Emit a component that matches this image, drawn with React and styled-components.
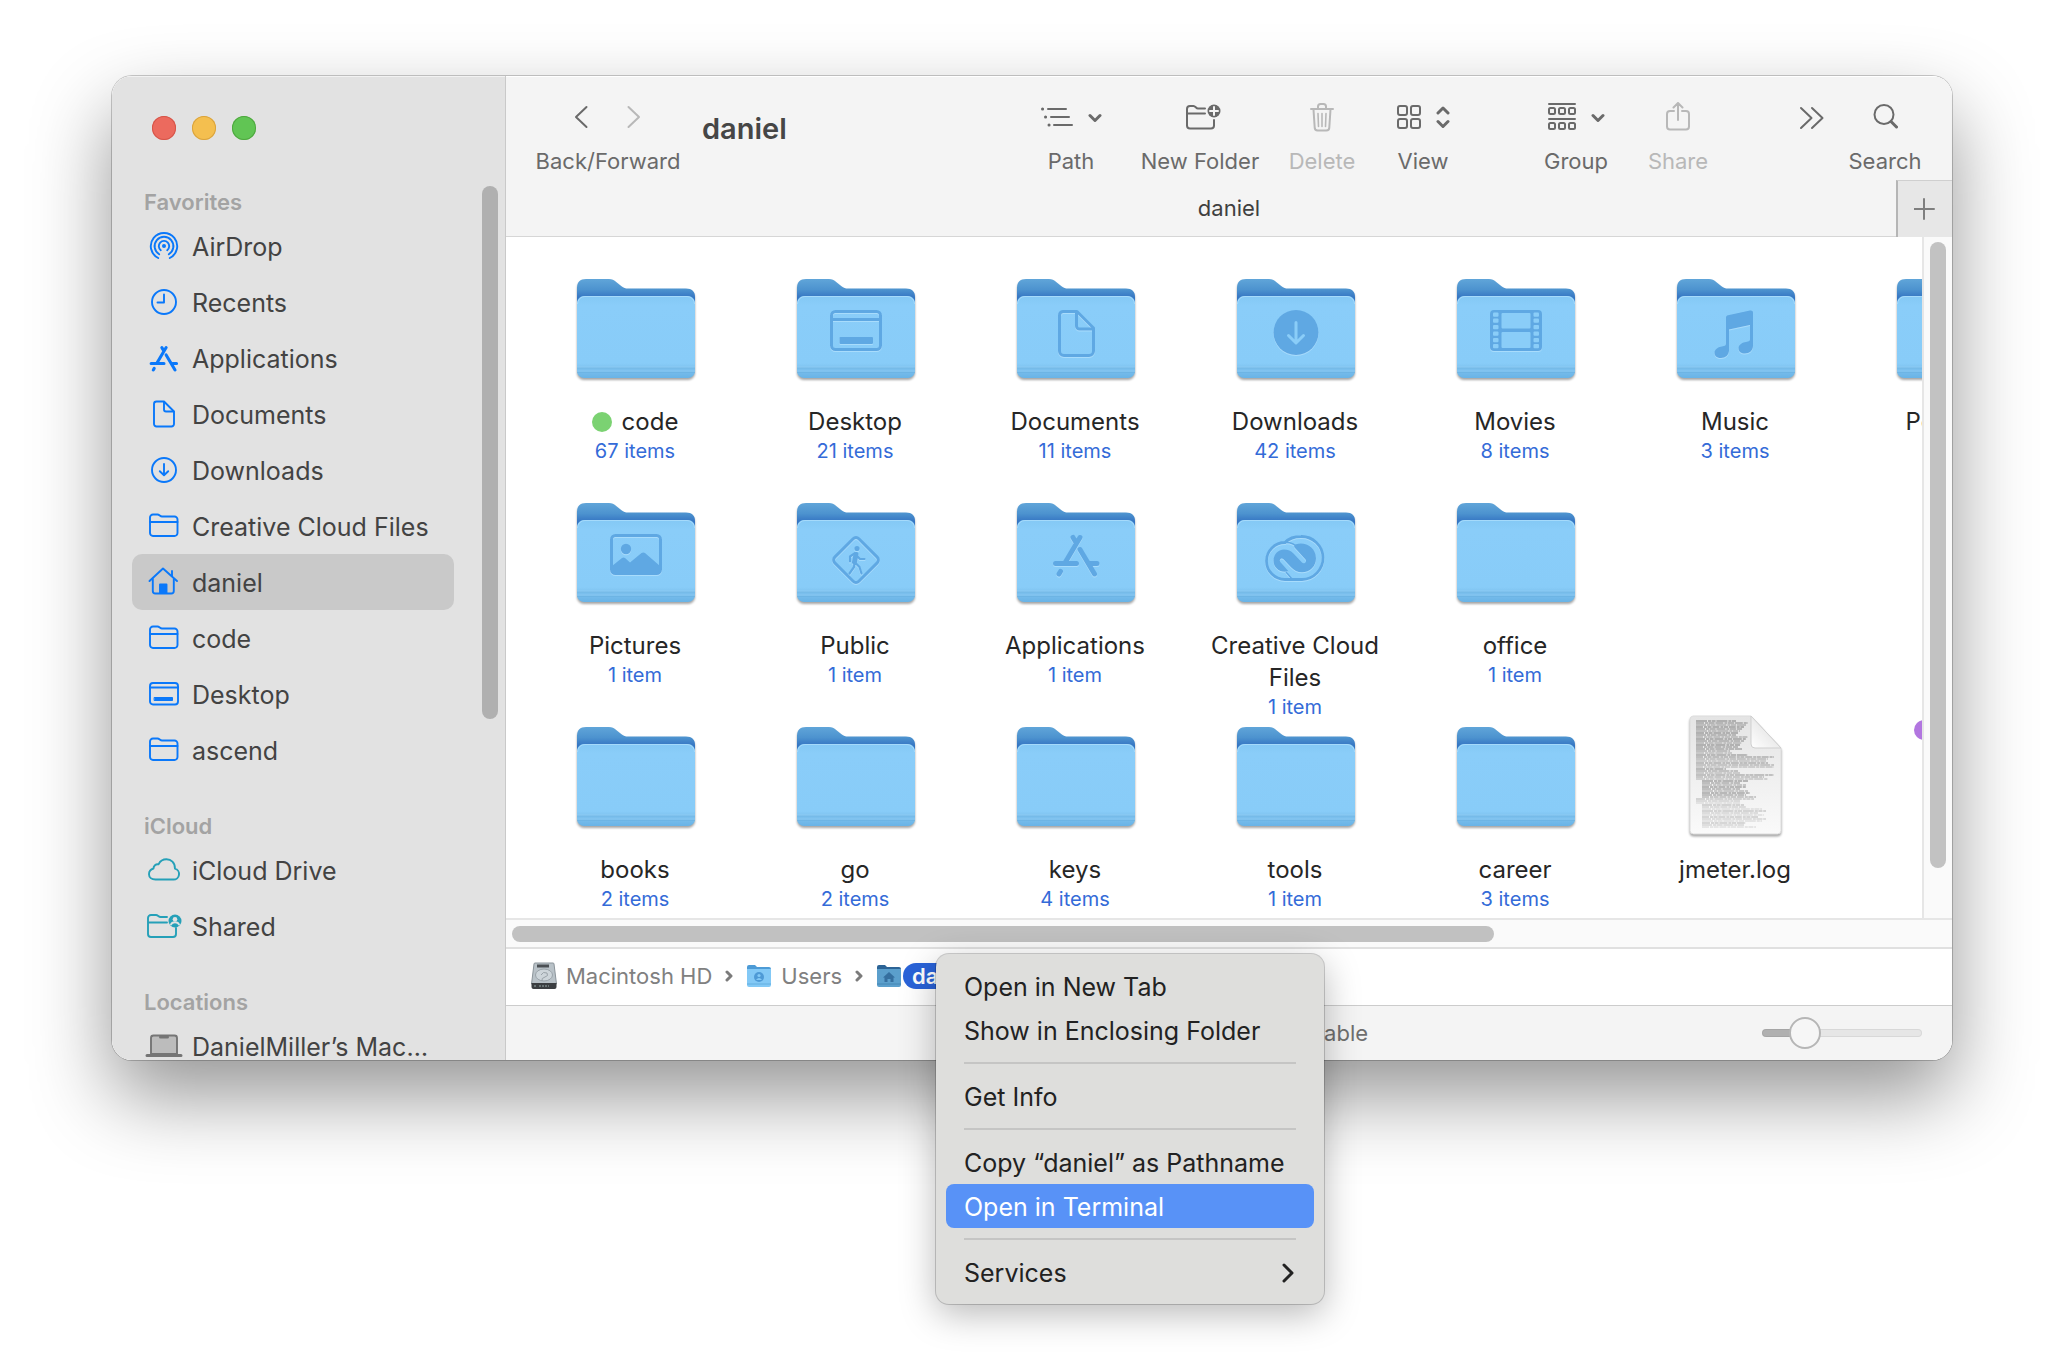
import React, { useState } from "react";
import styled, { createGlobalStyle } from "styled-components";

const blue = "#0a78fa";
const teal = "#25a0b8";
const toolColor = "#6a6a6a";
const disabledColor = "#b8b8b8";
const glyphColor = "#5fa8e3";

const favorites = [
    { name: "AirDrop", icon: "airdrop" },
    { name: "Recents", icon: "clock" },
    { name: "Applications", icon: "apps" },
    { name: "Documents", icon: "document" },
    { name: "Downloads", icon: "download" },
    { name: "Creative Cloud Files", icon: "folder" },
    { name: "daniel", icon: "home" },
    { name: "code", icon: "folder" },
    { name: "Desktop", icon: "desktop" },
    { name: "ascend", icon: "folder" },
];

const icloud = [
    { name: "iCloud Drive", icon: "cloud" },
    { name: "Shared", icon: "shared" },
];

const locations = [{ name: "DanielMiller’s Mac…", icon: "laptop" }];

const files = [
    { name: "code", info: "67 items", tag: "#7bd272" },
    { name: "Desktop", info: "21 items", glyph: "desktop" },
    { name: "Documents", info: "11 items", glyph: "document" },
    { name: "Downloads", info: "42 items", glyph: "download" },
    { name: "Movies", info: "8 items", glyph: "movies" },
    { name: "Music", info: "3 items", glyph: "music" },
    { name: "Postman", info: "" },
    { name: "Pictures", info: "1 item", glyph: "pictures" },
    { name: "Public", info: "1 item", glyph: "public" },
    { name: "Applications", info: "1 item", glyph: "apps" },
    { name: "Creative Cloud Files", info: "1 item", glyph: "creative" },
    { name: "office", info: "1 item" },
    { name: "books", info: "2 items", firstInRow: true },
    { name: "go", info: "2 items" },
    { name: "keys", info: "4 items" },
    { name: "tools", info: "1 item" },
    { name: "career", info: "3 items" },
    { name: "jmeter.log", file: true },
];

const AppsGlyph = () => (
    <g fill="none" stroke="currentColor" strokeWidth="5" strokeLinecap="round">
        <path d="M68 49.500L53.500 74M61 49.500L64 54.500" />
        <path d="M43.500 75.500H64.500M78.500 75.500H85" />
        <path d="M68 61.500L82.500 86" />
        <path d="M48.500 83.500L47 86" />
    </g>
);

const sideIcons = {
    airdrop: (
        <>
            <circle cx="16" cy="16" r="2" fill="currentColor" stroke="none" />
            <path d="M12.800 20.200a5.200 5.200 0 1 1 6.400 0" />
            <path d="M11.200 24.200a9.400 9.400 0 1 1 9.600 0" />
            <path d="M10.200 28a13.200 13.200 0 1 1 11.600 0" />
        </>
    ),
    clock: (
        <>
            <circle cx="16" cy="16" r="12" />
            <path d="M16 8.500V16.500H9.500" />
        </>
    ),
    document: (
        <>
            <path d="M8.500 3.500H16L26 13.500V26a2.500 2.500 0 0 1-2.500 2.500h-15A2.500 2.500 0 0 1 6 26V6a2.500 2.500 0 0 1 2.500-2.500z" />
            <path d="M16 4v7.500a2 2 0 0 0 2 2h7.500" />
        </>
    ),
    download: (
        <>
            <circle cx="16" cy="16" r="12" />
            <path d="M16 10v11M11.800 17.200L16 21.200l4.200-4" />
        </>
    ),
    folder: (
        <>
            <path d="M2 7.500a3 3 0 0 1 3-3h4.500c2 0 2.500 2 4.500 2h12.500a3 3 0 0 1 3 3V23a3 3 0 0 1-3 3H5a3 3 0 0 1-3-3z" />
            <path d="M2 12h27.500" />
        </>
    ),
    home: (
        <>
            <path d="M1.500 15L15 2.500 29 15" />
            <path d="M4.800 13v12a2.500 2.500 0 0 0 2.500 2.500h16a2.500 2.500 0 0 0 2.500-2.500V13M24 10V5" />
            <path d="M12 27v-8.500h6.500V27z" fill="currentColor" />
        </>
    ),
    desktop: (
        <>
            <rect x="2" y="5" width="28" height="21.500" rx="3" />
            <path d="M2 9.500h28" />
            <rect x="6.500" y="19.500" width="18" height="3" fill="currentColor" strokeWidth="1" />
        </>
    ),
    cloud: (
        <path d="M7.500 25.500h18a5.500 5.500 0 0 0 1.500-10.800C27 8.500 23 5.300 18.500 5.300c-3.800 0-6.500 2-8 5-2.800-.5-5 1.500-5 4.200C3 15.200 1 17.500 1 20.200c0 3 2.500 5.300 6.500 5.300z" />
    ),
    shared: (
        <>
            <path d="M19 7H12.500c-2 0-2.500-2-4.500-2H3a3 3 0 0 0-3 3v16a3 3 0 0 0 3 3h22a3 3 0 0 0 3-3v-6M0 12.500h19" />
            <circle cx="27" cy="11" r="6.500" fill="currentColor" stroke="none" />
            <circle cx="27" cy="9.300" r="2.300" fill="#e2e2e2" stroke="none" />
            <path d="M23 14.500c1-3 7-3 8 0" stroke="#e2e2e2" />
        </>
    ),
    laptop: (
        <>
            <path d="M3 24V8a2.500 2.500 0 0 1 2.500-2.500h21A2.500 2.500 0 0 1 29 8v16z" fill="#bcbcbc" />
            <path d="M-1 25.500H33M12.500 7h7" strokeWidth="3" />
        </>
    ),
};

const SideIcon = ({ name }) => (
    <IconBox $name={name}>
        {name === "apps" ? (
            <svg width="30" height="30" viewBox="40 42 49 49">
                <AppsGlyph />
            </svg>
        ) : (
            <svg
                width="32"
                height="32"
                viewBox="0 0 32 32"
                fill="none"
                stroke="currentColor"
                strokeWidth="1.900"
                strokeLinecap="round"
                strokeLinejoin="round"
                overflow="visible"
            >
                {sideIcons[name]}
            </svg>
        )}
    </IconBox>
);

const sprockets = [50, 56, 62.500, 69, 75.500, 81.500];

const glyphs = {
    desktop: (
        <g fill="none" stroke={glyphColor} strokeWidth="3">
            <rect x="39.500" y="47.500" width="49" height="38" rx="4" />
            <path d="M39.500 55.500h49" />
            <rect x="47.500" y="73" width="33.500" height="7" rx="1" fill={glyphColor} stroke="none" />
        </g>
    ),
    document: (
        <g fill="none" stroke={glyphColor} strokeWidth="3" strokeLinejoin="round">
            <path d="M51 47.500H65L81.500 64V87a4.500 4.500 0 0 1-4.500 4.500H52a4.500 4.500 0 0 1-4.500-4.500V51.500a4 4 0 0 1 3.500-4z" />
            <path d="M64.500 48v14a3 3 0 0 0 3 3H81" />
        </g>
    ),
    download: (
        <>
            <circle cx="64" cy="68.500" r="22.500" fill={glyphColor} />
            <path
                d="M64 58.500v20M56.500 71.500L64 79l7.500-7.500"
                fill="none"
                stroke="#8acdf8"
                strokeWidth="3"
                strokeLinecap="round"
                strokeLinejoin="round"
            />
        </>
    ),
    movies: (
        <>
            <rect x="38" y="46" width="52" height="41" rx="4" fill={glyphColor} />
            <rect x="49.500" y="49" width="29" height="15.500" rx="1" fill="#8acdf8" />
            <rect x="49.500" y="68" width="29" height="16" rx="1" fill="#8acdf8" />
            {sprockets.map((y) => (
                <g key={y} fill="#8acdf8">
                    <rect x="41" y={y - 1.500} width="5.500" height="4.200" rx="1" />
                    <rect x="81.500" y={y - 1.500} width="5.500" height="4.200" rx="1" />
                </g>
            ))}
        </>
    ),
    music: (
        <g fill={glyphColor}>
            <path d="M54 53.500c0-1.200.8-2 2-2.300l22-4.600c1.700-.4 3 .4 3 2V82c0 4.500-3.500 7.500-8 7.500-3.800 0-6.500-2-6.500-5 0-3.500 2.800-5.500 6.300-6.300l3.200-.8c1.300-.3 2-1 2-2.200V61L57 65.500V86.500c0 4.500-3.500 7.500-8 7.500-3.800 0-6.500-2-6.500-5 0-3.500 2.800-5.500 6.300-6.300l3.200-.8c1.300-.3 2-1 2-2.200z" />
        </g>
    ),
    pictures: (
        <>
            <rect x="39.500" y="47.500" width="49" height="38" rx="4" fill="none" stroke={glyphColor} strokeWidth="3" />
            <circle cx="54" cy="61" r="5.200" fill={glyphColor} />
            <path d="M40 78l10-8c1-.7 2-.7 3 0l5 4.500 11.500-9.500c1-.8 2.500-.8 3.500 0L88 78v5c0 2-1 3-3 3H43c-2 0-3-1-3-3z" fill={glyphColor} />
        </>
    ),
    public: (
        <g fill="none" stroke={glyphColor} strokeLinecap="round" strokeLinejoin="round">
            <rect x="47" y="55" width="34" height="34" rx="4" strokeWidth="3" transform="rotate(45 64 72)" />
            <circle cx="65" cy="60.500" r="2.600" fill={glyphColor} stroke="none" />
            <path d="M64 66.500L62.500 74" strokeWidth="5" />
            <path d="M62.500 65.500l-4.500 3v5M65.500 68.500l2.500 2.500h4.500M62.500 75l-.5 4-4.500 6.500M63.500 75l4 4 2 6.500" strokeWidth="2.200" />
        </g>
    ),
    apps: (
        <g color={glyphColor}>
            <AppsGlyph />
        </g>
    ),
    creative: (
        <>
            <path
                d="M53 54.500c4-4.200 9.500-6 16-6a21.500 21.500 0 0 1 1 43H53a18.500 18.500 0 0 1 0-37z"
                fill="none"
                stroke={glyphColor}
                strokeWidth="2.800"
            />
            <path
                d="M52 61.500c4 0 7 1.500 9.500 4L70 74.500c2 2 5.500-.5 3.500-3L63 60c-1.500-1.500-1-3 1-3.800 9-3 20 3 20 14 0 8-6 14-14 14-4.500 0-8-2-11-5l-7.500-8c-2-2-5 .5-3 3l8 9c-8 2-15-3-15-10.500 0-6 4.500-11.200 10.500-11.200z"
                fill={glyphColor}
            />
            <path d="M53 54.500c6-.5 9.500 1.500 13 5M54 84l6 7" fill="none" stroke={glyphColor} strokeWidth="1.500" />
        </>
    ),
};

const FolderArt = ({ glyph }) => (
    <FolderSvg viewBox="0 0 128 128">
        <path d="M5 24c0-6 3-9 9-9h23c3 0 5 1 7.500 3.200l5 4c2 1.700 4 2.300 6.500 2.300h58c6 0 9 3 9 8.500V90H5z" fill="url(#folderBack)" />
        <rect x="5" y="32" width="118" height="82" rx="7" fill="url(#folderFront)" />
        <path d="M5.500 40a7.500 7.500 0 0 1 7.500-7.500h102a7.500 7.500 0 0 1 7.500 7.500" fill="none" stroke="#a5dafb" />
        <path d="M5 104h118M5 108.500h118" stroke="#66aede" strokeOpacity=".5" />
        <path d="M5 103h118M5 107h118" stroke="#9bd5fa" strokeOpacity=".5" />
        {glyph ? <g filter="url(#emboss)">{glyphs[glyph]}</g> : null}
    </FolderSvg>
);

// blocks of log text: [lines, indent, shortest, longest, opacity]
const logBlocks = [
    [14, 0, 40, 54, 0.6],
    [4, 0, 34, 56, 0.55],
    [6, 0, 70, 80, 0.5],
    [3, 0, 30, 54, 0.55],
    [3, 0, 60, 80, 0.5],
    [9, 6, 42, 62, 0.6],
    [3, 0, 40, 62, 0.35],
    [12, 6, 48, 74, 0.35],
];

const logLines = logBlocks
    .flatMap(([count, indent, min, max, shade]) =>
        Array.from({ length: count }, (_, i) => ({ indent, min, max, shade, i }))
    )
    .map((l, n) => ({
        y: 9 + n * 2,
        x: 24 + l.indent,
        w: l.min - l.indent + ((n * n * 7 + n * 5) % (l.max - l.min)),
        shade: l.shade - (l.i % 3) * 0.08,
    }));

const LogArt = () => (
    <FolderSvg viewBox="0 0 128 128">
        <path d="M21 4H79L109 36V118.500a3.500 3.500 0 0 1-3.500 3.500h-84A3.500 3.500 0 0 1 18 118.500V7.500A3.500 3.500 0 0 1 21 4z" fill="url(#paper)" stroke="#dcdcdc" />
        {logLines.map((l) => (
            <path
                key={l.y}
                d={`M${l.x} ${l.y}h${l.w}`}
                stroke="#333"
                strokeWidth="1.200"
                strokeOpacity={l.shade}
                strokeDasharray={`${7 + (l.y % 5)} 1 3 .6 ${4 + (l.y % 3)} .8`}
            />
        ))}
        <path d="M79 4v28a4 4 0 0 0 4 4h26z" fill="url(#fold)" stroke="#cfcfcf" />
    </FolderSvg>
);

// gradients shared by every folder and file icon
const Defs = () => (
    <DefsSvg width="0" height="0">
        <defs>
            <linearGradient id="folderBack" gradientUnits="userSpaceOnUse" x1="0" y1="15" x2="0" y2="34">
                <stop offset="0" stopColor="#60a5d9" />
                <stop offset=".55" stopColor="#4d93cf" />
                <stop offset="1" stopColor="#3474c2" />
            </linearGradient>
            <linearGradient id="folderFront" x1="0" y1="0" x2="0" y2="1">
                <stop offset="0" stopColor="#84c8f5" />
                <stop offset=".12" stopColor="#8acdf9" />
                <stop offset=".82" stopColor="#88ccf8" />
                <stop offset=".88" stopColor="#7dc1ee" />
                <stop offset="1" stopColor="#69b3e6" />
            </linearGradient>
            <linearGradient id="paper" x1="0" y1="0" x2="0" y2="1">
                <stop offset="0" stopColor="#e4e4e4" />
                <stop offset="1" stopColor="#fafafa" />
            </linearGradient>
            <linearGradient id="fold" x1="0" y1="1" x2="1" y2="0">
                <stop offset="0" stopColor="#fff" />
                <stop offset="1" stopColor="#d8d8d8" />
            </linearGradient>
            <filter id="emboss">
                <feDropShadow dx="0" dy="1" stdDeviation=".5" floodColor="#a8dcfc" />
            </filter>
        </defs>
    </DefsSvg>
);

const ToolSvg = ({ w, h, children, stroke = 2 }) => (
    <svg
        width={w}
        height={h}
        viewBox={`0 0 ${w} ${h}`}
        fill="none"
        stroke="currentColor"
        strokeWidth={stroke}
        strokeLinecap="round"
        strokeLinejoin="round"
    >
        {children}
    </svg>
);

const ChevronDown = () => (
    <ToolSvg w={14} h={10} stroke={3}>
        <path d="M2 3.500l5 5 5-5" />
    </ToolSvg>
);

const Cells = ({ y }) => (
    <>
        <rect x="1" y={y} width="6" height="6" rx="1.500" />
        <rect x="11" y={y} width="6" height="6" rx="1.500" />
        <rect x="21" y={y} width="6" height="6" rx="1.500" />
    </>
);

const SidebarSection = ({ title, items, selected, onSelect }) => (
    <Section>
        <SectionTitle>{title}</SectionTitle>
        {items.map((item) => (
            <SideRow
                key={item.name}
                $active={item.name === selected}
                onClick={() => onSelect(item.name)}
            >
                <SideIcon name={item.icon} />
                <SideName>{item.name}</SideName>
            </SideRow>
        ))}
    </Section>
);

const MiniFolder = ({ dark, children }) => (
    <svg width="26" height="26" viewBox="0 0 26 26">
        <path d="M1 4q0-2 2-2h6l2 2h12q2 0 2 2v8H1z" fill={dark ? "#2c6496" : "#4d9bd6"} />
        <path d="M1 6h24v16q0 2-2 2H3q-2 0-2-2z" fill={dark ? "#5b9fcc" : "#83c9f6"} />
        <path d="M1 21h24" stroke={dark ? "#4486b4" : "#63afe0"} />
        <g fill={dark ? "#356f9f" : "#4e9ad6"}>{children}</g>
    </svg>
);

export default function App() {
    const [selected, setSelected] = useState("daniel");
    const [zoom, setZoom] = useState(21);

    return (
        <Page>
            <GlobalStyle />
            <Defs />
            <Frame>
                <Shell>
                    <Sidebar>
                        <Lights>
                            <Light $color="#ec6a5e" $edge="#d55549" aria-label="Close" />
                            <Light $color="#f4bf4f" $edge="#d9a33e" aria-label="Minimize" />
                            <Light $color="#61c554" $edge="#4fa73f" aria-label="Zoom" />
                        </Lights>
                        <SideScroll>
                            <SideList>
                                <SidebarSection title="Favorites" items={favorites} selected={selected} onSelect={setSelected} />
                                <SidebarSection title="iCloud" items={icloud} selected={selected} onSelect={setSelected} />
                                <SidebarSection title="Locations" items={locations} selected={selected} onSelect={setSelected} />
                            </SideList>
                            <SideThumb />
                        </SideScroll>
                    </Sidebar>

                    <Main>
                        <Toolbar>
                            <History>
                                <HistoryButtons>
                                    <NavButton aria-label="Back">
                                        <ToolSvg w={24} h={24}>
                                            <path d="M16.500 2L6 12 16.500 22" />
                                        </ToolSvg>
                                    </NavButton>
                                    <NavButton aria-label="Forward" disabled>
                                        <ToolSvg w={24} h={24}>
                                            <path d="M6.500 2L17 12 6.500 22" />
                                        </ToolSvg>
                                    </NavButton>
                                </HistoryButtons>
                                <ToolLabel>Back/Forward</ToolLabel>
                            </History>
                            <Title>daniel</Title>
                            <ToolGroup>
                                <Tool $width={126}>
                                    <ToolIcons>
                                        <ToolSvg w={32} h={20}>
                                            <path d="M7 2h18M10 10h18M13 18h18" />
                                            <path d="M1.500 2h.1M4.500 10h.1M8 18h.1" strokeWidth="3" />
                                        </ToolSvg>
                                        <ChevronDown />
                                    </ToolIcons>
                                    <ToolLabel>Path</ToolLabel>
                                </Tool>
                                <Tool $width={132}>
                                    <ToolIcons>
                                        <ToolSvg w={42} h={26}>
                                            <path d="M26 4.500h-7c-2 0-2.500-2.500-4.500-2.500H11a3 3 0 0 0-3 3v16.500a3 3 0 0 0 3 3h21a3 3 0 0 0 3-3V16M8 9.500h18" />
                                            <circle cx="35" cy="7" r="6.500" fill="currentColor" stroke="none" />
                                            <path d="M35 3v8M31 7h8" stroke="#f4f4f4" />
                                        </ToolSvg>
                                    </ToolIcons>
                                    <ToolLabel>New Folder</ToolLabel>
                                </Tool>
                                <Tool $width={112} disabled>
                                    <ToolIcons>
                                        <ToolSvg w={24} h={30}>
                                            <path d="M1 7h22M3.500 7.500l1.200 18a3 3 0 0 0 3 3h8.600a3 3 0 0 0 3-3l1.200-18M8 6.500V4.500a2.500 2.500 0 0 1 2.500-2.500h3A2.500 2.500 0 0 1 16 4.500v2" />
                                            <path d="M8 11.500l.5 13M12 11.500v13M16 11.500l-.5 13" strokeWidth="1.600" />
                                        </ToolSvg>
                                    </ToolIcons>
                                    <ToolLabel>Delete</ToolLabel>
                                </Tool>
                                <Tool $width={90}>
                                    <ToolIcons>
                                        <ToolSvg w={24} h={24}>
                                            <rect x="1" y="1" width="9" height="9" rx="2" />
                                            <rect x="14" y="1" width="9" height="9" rx="2" />
                                            <rect x="1" y="14" width="9" height="9" rx="2" />
                                            <rect x="14" y="14" width="9" height="9" rx="2" />
                                        </ToolSvg>
                                        <ToolSvg w={14} h={24} stroke={3}>
                                            <path d="M2 8l5-5 5 5M2 16.500l5 5 5-5" />
                                        </ToolSvg>
                                    </ToolIcons>
                                    <ToolLabel>View</ToolLabel>
                                </Tool>
                            </ToolGroup>
                            <ToolGroup>
                                <Tool $width={104}>
                                    <ToolIcons>
                                        <ToolSvg w={28} h={28}>
                                            <path d="M1 1h26M1 16h26" />
                                            <Cells y={5} />
                                            <Cells y={20} />
                                        </ToolSvg>
                                        <ChevronDown />
                                    </ToolIcons>
                                    <ToolLabel>Group</ToolLabel>
                                </Tool>
                                <Tool $width={100} disabled>
                                    <ToolIcons>
                                        <ToolSvg w={24} h={30}>
                                            <path d="M8 9H4a3 3 0 0 0-3 3v12.500a3 3 0 0 0 3 3h16a3 3 0 0 0 3-3V12a3 3 0 0 0-3-3h-4M12 18V1.500M7.500 5.500L12 1l4.500 4.500" />
                                        </ToolSvg>
                                    </ToolIcons>
                                    <ToolLabel>Share</ToolLabel>
                                </Tool>
                            </ToolGroup>
                            <ToolGroup>
                                <Tool $width={56} aria-label="More">
                                    <ToolIcons>
                                        <ToolSvg w={26} h={26}>
                                            <path d="M2 4l10.500 10L2 24M13 4l10.500 10L13 24" />
                                        </ToolSvg>
                                    </ToolIcons>
                                </Tool>
                                <Tool $width={90}>
                                    <ToolIcons>
                                        <ToolSvg w={26} h={26}>
                                            <circle cx="12" cy="10.500" r="9.500" />
                                            <path d="M19 17.500l5.500 5.500" strokeWidth="3" />
                                        </ToolSvg>
                                    </ToolIcons>
                                    <ToolLabel>Search</ToolLabel>
                                </Tool>
                            </ToolGroup>
                        </Toolbar>

                        <TabBar>
                            <Tab>daniel</Tab>
                            <NewTab aria-label="New tab">
                                <ToolSvg w={22} h={22}>
                                    <path d="M10 1v20M0 11h20" />
                                </ToolSvg>
                            </NewTab>
                        </TabBar>

                        <Content>
                            <IconView>
                                {files.map((f, i) => (
                                    <FileItem key={f.name + i} $newRow={f.firstInRow}>
                                        {f.file ? <LogArt /> : <FolderArt glyph={f.glyph} />}
                                        <FileName>
                                            {f.tag ? <Tag $color={f.tag} /> : null}
                                            {f.name}
                                        </FileName>
                                        {f.info ? <FileInfo>{f.info}</FileInfo> : null}
                                    </FileItem>
                                ))}
                                <TagOnly>
                                    <Tag $color="#b276e0" />
                                </TagOnly>
                            </IconView>
                            <VerticalBar>
                                <VerticalThumb />
                            </VerticalBar>
                        </Content>
                        <HorizontalBar>
                            <HorizontalThumb />
                        </HorizontalBar>

                        <PathBar>
                            <Crumb href="#hd">
                                <svg width="26" height="28" viewBox="0 0 26 28">
                                    <path d="M3 2q0-1 1-1h18q1 0 1 1l2.500 20H.5z" fill="#b9c2c8" stroke="#8b949a" />
                                    <path d="M.5 21h25v4q0 2-2 2h-21q-2 0-2-2z" fill="#3b3e41" />
                                    <path d="M6 2.500h12v3H6z" fill="#4b5054" />
                                    <ellipse cx="13" cy="13" rx="8.500" ry="6" fill="#cdd5da" stroke="#9aa3a9" />
                                    <path d="M10 13q2-4 6-2 2 3-2 4-4 1-3 4" fill="none" stroke="#9aa3a9" />
                                    <path d="M3 24h2M8 24h10" stroke="#9aa" strokeDasharray="2 1" />
                                </svg>
                                Macintosh HD
                            </Crumb>
                            <ToolSvg w={8} h={12} stroke={3}>
                                <path d="M2 2l4 4-4 4" />
                            </ToolSvg>
                            <Crumb href="#users">
                                <MiniFolder>
                                    <circle cx="13" cy="14" r="5" />
                                    <circle cx="13" cy="12.500" r="1.600" fill="#83c9f6" />
                                    <path d="M10 17q3-4 6 0z" fill="#83c9f6" />
                                </MiniFolder>
                                Users
                            </Crumb>
                            <ToolSvg w={8} h={12} stroke={3}>
                                <path d="M2 2l4 4-4 4" />
                            </ToolSvg>
                            <ActiveCrumb href="#daniel">
                                <MiniFolder dark>
                                    <path d="M13 9l6 5.500h-1.500V19h-3v-3h-3v3h-3v-4.500H7z" />
                                </MiniFolder>
                                <Pill>daniel</Pill>
                            </ActiveCrumb>
                        </PathBar>

                        <StatusBar>
                            <Status>18 items, 4.36 GB available</Status>
                            <ZoomSlider
                                type="range"
                                aria-label="Icon size"
                                min="0"
                                max="100"
                                value={zoom}
                                onChange={(e) => setZoom(e.target.value)}
                            />
                        </StatusBar>
                    </Main>
                </Shell>

                <Menu>
                    <MenuItem>Open in New Tab</MenuItem>
                    <MenuItem>Show in Enclosing Folder</MenuItem>
                    <Divider />
                    <MenuItem>Get Info</MenuItem>
                    <Divider />
                    <MenuItem>Copy “daniel” as Pathname</MenuItem>
                    <MenuItem $active>Open in Terminal</MenuItem>
                    <Divider />
                    <MenuItem>
                        Services
                        <ToolSvg w={14} h={20} stroke={3}>
                            <path d="M2 2l8 8-8 8" />
                        </ToolSvg>
                    </MenuItem>
                </Menu>
            </Frame>
        </Page>
    );
}

const GlobalStyle = createGlobalStyle`
    * {
        box-sizing: border-box;
    }
    body {
        margin: 0;
        background-color: #fff;
        font-family: Inter, "Liberation Sans", sans-serif;
    }
    button {
        font-family: inherit;
        border: none;
        padding: 0;
        background: none;
    }
    svg {
        flex: none;
    }
`;

const Page = styled.div`
    min-height: 100vh;
    padding: 76px 112px;
    overflow: hidden;
`;

const DefsSvg = styled.svg`
    position: absolute;
`;

const Frame = styled.div`
    position: relative;
    border-radius: 20px;
    box-shadow: 0 0 0 1px rgba(0, 0, 0, 0.2), 0 36px 80px rgba(0, 0, 0, 0.42);
`;

const Shell = styled.div`
    display: flex;
    height: calc(100vh - 374px);
    min-height: 600px;
    border-radius: 20px;
    overflow: hidden;
    background-color: #fff;
`;

const Sidebar = styled.aside`
    display: flex;
    flex-direction: column;
    flex: none;
    width: 394px;
    background-color: #e2e2e2;
    border-right: 1px solid #c9c9c9;
    box-shadow: inset 0 1px 0 #f2f2f2;
`;

const Lights = styled.div`
    display: flex;
    flex: none;
    gap: 16px;
    height: 110px;
    padding: 40px 40px 0;
`;

const Light = styled.button`
    width: 24px;
    height: 24px;
    border-radius: 50%;
    background-color: ${(props) => props.$color};
    box-shadow: inset 0 0 0 1px ${(props) => props.$edge};
`;

const SideScroll = styled.div`
    display: flex;
    flex: 1;
    min-height: 0;
    padding: 0 7px 0 20px;
`;

const SideList = styled.nav`
    flex: 1;
    margin-right: 28px;
    overflow: hidden;
`;

const SideThumb = styled.div`
    flex: none;
    width: 16px;
    height: 61%;
    border-radius: 8px;
    background-color: #b0b0b0;
`;

const Section = styled.section`
    margin-bottom: 32px;
`;

const SectionTitle = styled.h2`
    margin: 0;
    padding-left: 12px;
    font-size: 22px;
    line-height: 32px;
    font-weight: 600;
    color: #a3a3a3;
`;

const SideRow = styled.button`
    display: flex;
    align-items: center;
    gap: 12px;
    width: 100%;
    height: 56px;
    padding-left: 16px;
    border-radius: 10px;
    font-size: 25px;
    color: #434343;
    white-space: nowrap;
    background-color: ${(props) => (props.$active ? "#c9c9c9" : "transparent")};
`;

const SideName = styled.span`
    padding-top: 2px;
`;

const IconBox = styled.span`
    display: flex;
    align-items: center;
    justify-content: center;
    width: 32px;
    height: 32px;
    color: ${({ $name }) => {
        if ($name === "laptop") return "#757575";
        return $name === "cloud" || $name === "shared" ? teal : blue;
    }};
`;

const Main = styled.main`
    display: flex;
    flex-direction: column;
    flex: 1;
    min-width: 0;
`;

const Toolbar = styled.header`
    display: flex;
    gap: 56px;
    flex: none;
    height: 104px;
    padding: 21px 22px 0 24px;
    background-color: #f4f4f4;
    box-shadow: inset 0 1px 0 #fff;
`;

const History = styled.div`
    display: flex;
    flex-direction: column;
    align-items: center;
    gap: 11px;
    width: 156px;
    margin-right: -40px;
`;

const HistoryButtons = styled.div`
    display: flex;
    gap: 28px;
    height: 40px;
`;

const NavButton = styled.button`
    display: flex;
    align-items: center;
    color: ${toolColor};
    &:disabled {
        color: ${disabledColor};
    }
`;

const Title = styled.h1`
    flex: 1;
    margin: 0;
    font-size: 29px;
    line-height: 63px;
    font-weight: 600;
    color: #464646;
`;

const ToolGroup = styled.div`
    display: flex;
    align-items: flex-start;
`;

const Tool = styled.button`
    display: flex;
    flex-direction: column;
    align-items: center;
    gap: 11px;
    width: ${(props) => props.$width}px;
    color: ${toolColor};
    &:disabled {
        color: ${disabledColor};
    }
`;

const ToolIcons = styled.span`
    display: flex;
    align-items: center;
    gap: 15px;
    height: 40px;
`;

const ToolLabel = styled.span`
    font-size: 22px;
    line-height: 26px;
    color: inherit;
    white-space: nowrap;
    ${History} & {
        color: ${toolColor};
    }
`;

const TabBar = styled.div`
    display: grid;
    grid-template-columns: 56px 1fr 56px;
    flex: none;
    height: 57px;
    background-color: #f4f4f4;
    border-bottom: 1px solid #d6d6d6;
`;

const Tab = styled.div`
    grid-column: 2;
    font-size: 22px;
    line-height: 57px;
    text-align: center;
    color: #3f3f3f;
`;

const NewTab = styled.button`
    display: flex;
    align-items: center;
    justify-content: center;
    color: #7f7f7f;
    background-color: #e7e7e7;
    border-top: 1px solid #cfcfcf;
    border-left: 2px solid #b5b5b5;
`;

const Content = styled.div`
    display: flex;
    flex: 1;
    min-height: 0;
`;

const IconView = styled.div`
    display: grid;
    grid-template-columns: repeat(7, 220px);
    grid-auto-rows: 224px;
    flex: 1;
    min-width: 0;
    padding: 27px 0 0 20px;
    overflow: hidden;
`;

const FileItem = styled.div`
    display: flex;
    flex-direction: column;
    align-items: center;
    ${(props) => (props.$newRow ? "grid-column-start: 1;" : "")}
`;

const FolderSvg = styled.svg`
    width: 128px;
    height: 128px;
    margin-bottom: 14px;
    filter: drop-shadow(0 2px 1px rgba(0, 0, 0, 0.35));
`;

const FileName = styled.span`
    display: flex;
    align-items: center;
    gap: 10px;
    max-width: 180px;
    padding-right: 2px;
    font-size: 24px;
    line-height: 32px;
    text-align: center;
    color: #262626;
`;

const FileInfo = styled.span`
    padding-right: 2px;
    font-size: 20px;
    line-height: 27px;
    color: #346bd8;
`;

const Tag = styled.span`
    width: 20px;
    height: 20px;
    border-radius: 50%;
    background-color: ${(props) => props.$color};
`;

const TagOnly = styled.div`
    display: flex;
    padding: 8px 0 0 68px;
    grid-column: 7;
    grid-row: 3;
`;

const VerticalBar = styled.div`
    flex: none;
    width: 30px;
    padding: 5px 5px 50px 6px;
    background-color: #fafafa;
    border-left: 2px solid #e6e6e6;
`;

const VerticalThumb = styled.div`
    width: 16px;
    height: 100%;
    border-radius: 8px;
    background-color: #c2c2c2;
`;

const HorizontalBar = styled.div`
    flex: none;
    height: 31px;
    padding: 6px;
    background-color: #fafafa;
    border-top: 2px solid #e6e6e6;
    border-bottom: 2px solid #e0e0e0;
`;

const HorizontalThumb = styled.div`
    width: 68.5%;
    height: 16px;
    border-radius: 8px;
    background-color: #c1c1c1;
`;

const PathBar = styled.nav`
    display: flex;
    align-items: center;
    gap: 13px;
    flex: none;
    height: 57px;
    padding: 0 0 2px 25px;
    color: #7b7b7b;
    background-color: #fff;
    border-bottom: 1px solid #cccccc;
`;

const Crumb = styled.a`
    display: flex;
    align-items: center;
    gap: 9px;
    font-size: 22px;
    color: #808080;
    text-decoration: none;
`;

const ActiveCrumb = styled(Crumb)`
    gap: 1px;
`;

const Pill = styled.span`
    padding: 0 9px;
    border-radius: 13px;
    font-weight: 600;
    line-height: 26px;
    color: #fff;
    background-color: #2a63d8;
`;

const StatusBar = styled.footer`
    display: grid;
    grid-template-columns: 190px 1fr 190px;
    align-items: center;
    flex: none;
    height: 54px;
    padding-bottom: 1px;
    background-color: #f4f4f4;
`;

const Status = styled.span`
    grid-column: 2;
    font-size: 22px;
    text-align: center;
    color: #6f6f6f;
`;

const ZoomSlider = styled.input`
    appearance: none;
    width: 160px;
    height: 32px;
    margin: 0;
    background: transparent;
    &::-webkit-slider-runnable-track {
        height: 8px;
        border-radius: 4px;
        background: linear-gradient(
            to right,
            #b0b0b0 ${(props) => props.value}%,
            #e6e6e6 ${(props) => props.value}%
        );
        box-shadow: inset 0 0 0 1px rgba(0, 0, 0, 0.06);
    }
    &::-webkit-slider-thumb {
        appearance: none;
        width: 32px;
        height: 32px;
        margin-top: -12px;
        border: 2px solid #b6b6b6;
        border-radius: 50%;
        background-color: #f6f6f6;
    }
`;

const Menu = styled.div`
    position: absolute;
    top: 878px;
    left: 824px;
    width: 388px;
    padding: 10px;
    border-radius: 13px;
    background-color: #dededc;
    box-shadow: 0 0 0 1px rgba(0, 0, 0, 0.18), 0 10px 36px rgba(0, 0, 0, 0.28);
`;

const MenuItem = styled.button`
    display: flex;
    align-items: center;
    justify-content: space-between;
    width: 100%;
    height: 44px;
    padding: 2px 18px 0;
    border-radius: 8px;
    font-size: 25px;
    white-space: nowrap;
    color: ${(props) => (props.$active ? "#fff" : "#222")};
    background-color: ${(props) => (props.$active ? "#5892f7" : "transparent")};
`;

const Divider = styled.hr`
    height: 2px;
    margin: 10px 18px;
    border: none;
    background-color: #c5c5c4;
`;
